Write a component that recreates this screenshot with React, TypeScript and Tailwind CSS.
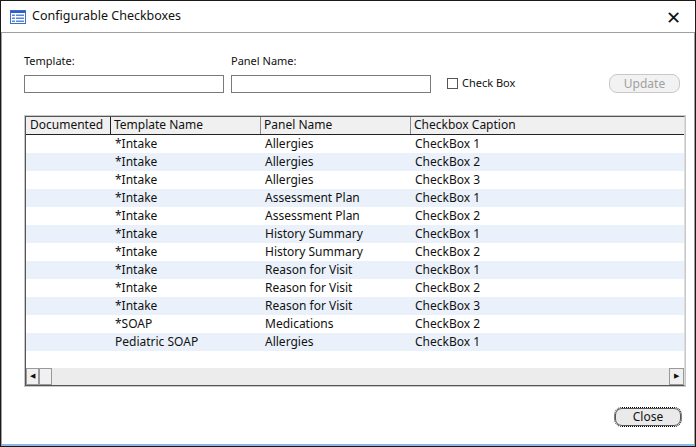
import React from "react";

const rows = [
  ["*Intake", "Allergies", "CheckBox 1"],
  ["*Intake", "Allergies", "CheckBox 2"],
  ["*Intake", "Allergies", "CheckBox 3"],
  ["*Intake", "Assessment Plan", "CheckBox 1"],
  ["*Intake", "Assessment Plan", "CheckBox 2"],
  ["*Intake", "History Summary", "CheckBox 1"],
  ["*Intake", "History Summary", "CheckBox 2"],
  ["*Intake", "Reason for Visit", "CheckBox 1"],
  ["*Intake", "Reason for Visit", "CheckBox 2"],
  ["*Intake", "Reason for Visit", "CheckBox 3"],
  ["*SOAP", "Medications", "CheckBox 2"],
  ["Pediatric SOAP", "Allergies", "CheckBox 1"],
];

export default function App() {
  return (
    <div className="w-[696px] h-[447px] bg-white border border-[#1a1a1a] flex flex-col text-[12px] text-[#111]" style={{ fontFamily: '"Noto Sans", "Liberation Sans", sans-serif' }}>
      <div className="h-[31px] flex items-center pl-[9px] shrink-0">
        <svg width="16" height="14" viewBox="0 0 16 14">
          <rect x="0.5" y="0.5" width="15" height="13" fill="#fff" stroke="#3b6fc8" />
          <rect x="1" y="1" width="14" height="2" fill="#2f5fbf" />
          <rect x="2" y="4.5" width="3" height="1.5" fill="#5a86d6" />
          <rect x="2" y="7.5" width="3" height="1.5" fill="#5a86d6" />
          <rect x="2" y="10.5" width="3" height="1.5" fill="#5a86d6" />
          <rect x="6" y="4.5" width="8" height="1.5" fill="#5a86d6" />
          <rect x="6" y="7.5" width="8" height="1.5" fill="#5a86d6" />
          <rect x="6" y="10.5" width="8" height="1.5" fill="#5a86d6" />
        </svg>
        <span className="ml-[6px] text-[12.5px]">Configurable Checkboxes</span>
        <span className="ml-auto mr-[14px] text-[18px] font-light leading-none">✕</span>
      </div>
      <div className="flex-1 border-t border-l border-r border-[#a0a0a0] mx-0 flex flex-col px-[22px] relative">
        <div className="flex mt-[20px] text-[11px]">
          <div className="w-[207px]">Template:</div>
          <div>Panel Name:</div>
        </div>
        <div className="flex items-center mt-[5px] h-[18px]">
          <div className="w-[200px] h-[18px] border border-[#7a7a7a]" />
          <div className="w-[200px] h-[18px] border border-[#7a7a7a] ml-[7px]" />
          <div className="w-[11px] h-[11px] border border-[#555] ml-[16px]" />
          <span className="ml-[4px] text-[11px]">Check Box</span>
          <div className="ml-auto mr-[-8px] w-[71px] h-[19px] rounded-[8px] border border-[#c8c8c8] bg-[#f2f2f2] text-[#a0a0a0] flex items-center justify-center">Update</div>
        </div>
        <div className="mt-[22px] h-[272px] w-[662px] border border-[#c8c8c8] flex flex-col">
          <div className="flex-1 border border-[#555] border-r-[#ddd] flex flex-col overflow-hidden">
            <div className="flex h-[18px] bg-[#f0f0f0] border-b border-[#222] shrink-0">
              <div className="w-[85px] pl-[4px] border-r border-[#222] flex items-center">Documented</div>
              <div className="w-[150px] pl-[3px] border-r border-[#888] flex items-center">Template Name</div>
              <div className="w-[150px] pl-[3px] border-r border-[#888] flex items-center">Panel Name</div>
              <div className="flex-1 pl-[3px] flex items-center whitespace-nowrap">Checkbox Caption</div>
            </div>
            <div className="flex-1">
              {rows.map((r, i) => (
                <div key={i} className={`flex h-[18px] items-center ${i % 2 ? "bg-[#eaf1fb]" : "bg-white"}`}>
                  <div className="w-[85px]" />
                  <div className="w-[150px] pl-[4px]">{r[0]}</div>
                  <div className="w-[150px] pl-[4px]">{r[1]}</div>
                  <div className="pl-[4px]">{r[2]}</div>
                </div>
              ))}
            </div>
            <div className="h-[17px] flex shrink-0 bg-[#f3f3f3]">
              <div className="w-[13px] border border-[#999] bg-[#f0f0f0] flex items-center justify-center text-[7px]">◀</div>
              <div className="w-[13px] border border-[#999] bg-[#f0f0f0]" />
              <div className="flex-1 bg-[#ececec]" />
              <div className="w-[15px] border border-[#999] bg-[#f0f0f0] flex items-center justify-center text-[7px]">▶</div>
            </div>
          </div>
        </div>
        <div className="flex justify-end mt-[21px] mr-[-9px]">
          <div className="w-[66px] h-[18px] rounded-[7px] border border-[#555] outline outline-1 outline-dotted outline-[#000] bg-[#eaeaea] flex items-center justify-center">Close</div>
        </div>
        <div className="absolute left-0 right-0 bottom-0 h-[2px] bg-[#3c8ad8] opacity-60" />
      </div>
    </div>
  );
}
